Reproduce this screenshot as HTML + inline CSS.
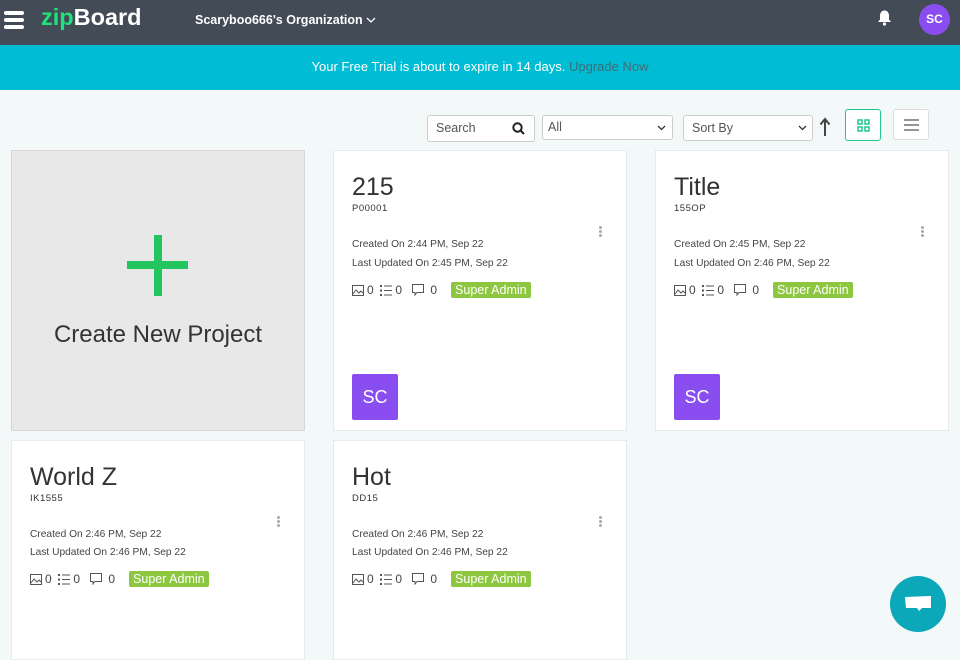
<!DOCTYPE html>
<html><head><style>
*{box-sizing:border-box;margin:0;padding:0}
body{width:960px;height:640px;overflow:hidden;background:#f3f8f8;font-family:"Liberation Sans","DejaVu Sans",sans-serif;position:relative;color:#333}
.hdr{position:absolute;left:0;top:0;width:960px;height:45px;background:#434b56}
.ban{position:absolute;left:0;top:45px;width:960px;height:45px;background:#00bcd4;color:#fff;font-size:13px;text-align:center;line-height:43px}
.ban span{color:#3a6f78}
.card{position:absolute;background:#fff;border:1px solid #e6ecec;width:294px}
.card .t{position:absolute;left:18px;top:22px;font-size:25px;font-weight:300;color:#333}
.card .c{position:absolute;left:18px;top:52px;font-size:9.5px;letter-spacing:.5px;color:#333}
.card .l{position:absolute;left:18px;font-size:10.2px;color:#444}
.card .row{position:absolute;left:18px;top:131px;font-size:12px;color:#444;display:flex;align-items:center}
.sa{background:#8dc63f;color:#fff;font-size:12.5px;padding:0 4px;border-radius:2px;height:16px;line-height:16px;margin-left:4px}
.av{position:absolute;left:18px;top:223px;width:46px;height:46px;background:#8a4ef0;color:#fff;font-size:18px;text-align:center;line-height:46px;border-radius:2px}
.keb{position:absolute;left:265px;top:75px;width:3px}
.keb i{display:block;width:3px;height:3px;background:#aaa;border-radius:50%;margin-bottom:1px}
.ic{display:inline-block;margin-right:3px}
.inp{position:absolute;background:#fff;border:1px solid #ccc;border-radius:3px;height:27px;font-size:12.5px;color:#555;line-height:25px;padding-left:8px}
</style></head><body>
<div class="hdr">
<div style="position:absolute;left:4px;top:11px;width:20px"><div style="height:4px;background:#fff;border-radius:2px;margin-bottom:3px"></div><div style="height:4px;background:#fff;border-radius:2px;margin-bottom:3px"></div><div style="height:4px;background:#fff;border-radius:2px"></div></div>
<div style="position:absolute;left:41px;top:4px;font-size:23.5px;font-weight:bold;color:#fff"><span style="color:#1ee37a">zip</span>Board</div>
<div style="position:absolute;left:195px;top:13px;font-size:12.5px;color:#fff;font-weight:bold">Scaryboo666's Organization <svg width="10" height="7" viewBox="0 0 10 7"><path d="M1 1l4 4 4-4" stroke="#fff" fill="none" stroke-width="1.3"/></svg></div>
<svg style="position:absolute;left:876px;top:9px" width="17" height="17" viewBox="0 0 17 17"><path d="M8.5 1.5c-3 0-4.5 2.5-4.5 5v4l-2 2.5h13l-2-2.5v-4c0-2.5-1.5-5-4.5-5z" fill="#fff"/><circle cx="8.5" cy="15" r="1.6" fill="#fff"/></svg>
<div style="position:absolute;left:919px;top:4px;width:31px;height:31px;border-radius:50%;background:#8a4ef0;color:#fff;font-size:12px;font-weight:bold;text-align:center;line-height:31px">SC</div>
</div>
<div class="ban">Your Free Trial is about to expire in 14 days. <span>Upgrade Now</span></div>

<div class="inp" style="left:427px;top:115px;width:108px">Search<svg style="position:absolute;right:9px;top:6px" width="13" height="13" viewBox="0 0 13 13"><circle cx="5.5" cy="5.5" r="4.2" stroke="#222" stroke-width="2" fill="none"/><path d="M8.5 8.5l3.5 3.5" stroke="#222" stroke-width="2"/></svg></div>
<div class="inp" style="left:542px;top:115px;width:131px;height:25px;line-height:23px;padding-left:5px">All<svg style="position:absolute;right:6px;top:9px" width="9" height="6"><path d="M1 1l3.5 3.5L8 1" stroke="#333" fill="none" stroke-width="1.3"/></svg></div>
<div class="inp" style="left:683px;top:115px;width:130px;height:26px">Sort By<svg style="position:absolute;right:5px;top:9px" width="9" height="6"><path d="M1 1l3.5 3.5L8 1" stroke="#333" fill="none" stroke-width="1.3"/></svg></div>
<svg style="position:absolute;left:819px;top:117px" width="12" height="20" viewBox="0 0 12 20"><path d="M6 19V3M1.5 7.5L6 2l4.5 5.5" stroke="#444" stroke-width="2" fill="none"/></svg>
<div style="position:absolute;left:845px;top:109px;width:36px;height:32px;border:1px solid #1ec98b;border-radius:3px;background:#fff"><svg style="position:absolute;left:11px;top:9px" width="13" height="13" viewBox="0 0 13 13" fill="none" stroke="#1ec98b" stroke-width="1.5"><rect x="1" y="1" width="4" height="4"/><rect x="8" y="1" width="4" height="4"/><rect x="1" y="8" width="4" height="4"/><rect x="8" y="8" width="4" height="4"/></svg></div>
<div style="position:absolute;left:893px;top:109px;width:36px;height:31px;border:1px solid #ddd;border-radius:3px;background:#fff"><svg style="position:absolute;left:10px;top:9px" width="15" height="12" viewBox="0 0 15 12"><path d="M0 1h15M0 6h15M0 11h15" stroke="#555" stroke-width="1.3"/></svg></div>

<div style="position:absolute;left:11px;top:150px;width:294px;height:281px;background:#e8e8e8;border:1px solid #d6d6d6">
<div style="position:absolute;left:115px;width:61px;height:8px;background:#22c55e;top:110px"></div>
<div style="position:absolute;left:142px;top:84px;width:8px;height:61px;background:#22c55e"></div>
<div style="position:absolute;left:0;width:100%;top:170px;text-align:center;font-size:24px;font-weight:300;color:#333">Create New Project</div>
</div>

<div class="card" style="left:333px;top:150px;height:281px"><div class="t">215</div><div class="c">P00001</div><div class="keb"><i></i><i></i><i></i></div><div class="l" style="top:88px">Created On 2:44 PM, Sep 22</div><div class="l" style="top:107px">Last Updated On 2:45 PM, Sep 22</div><div class="row">
<svg class="ic" width="12" height="11" viewBox="0 0 12 11" fill="none" stroke="#555"><rect x=".5" y=".5" width="11" height="10"/><path d="M1 9l3-4 3 3 2-2 2 2"/></svg>0&nbsp;&nbsp;<svg class="ic" width="12" height="11" viewBox="0 0 12 11" fill="#555"><rect x="0" y="0" width="2" height="2"/><rect x="0" y="4.5" width="2" height="2"/><rect x="0" y="9" width="2" height="2"/><rect x="4" y=".5" width="8" height="1"/><rect x="4" y="5" width="8" height="1"/><rect x="4" y="9.5" width="8" height="1"/></svg>0&nbsp;&nbsp;&nbsp;<svg class="ic" width="12" height="12" viewBox="0 0 12 12" fill="none" stroke="#555"><path d="M.5.5h11v8H5l-2 2.5v-2.5H.5z"/></svg>&nbsp;0&nbsp;&nbsp;&nbsp;<span class="sa">Super Admin</span></div><div class="av">SC</div></div>

<div class="card" style="left:655px;top:150px;height:281px"><div class="t">Title</div><div class="c">155OP</div><div class="keb"><i></i><i></i><i></i></div><div class="l" style="top:88px">Created On 2:45 PM, Sep 22</div><div class="l" style="top:107px">Last Updated On 2:46 PM, Sep 22</div><div class="row">
<svg class="ic" width="12" height="11" viewBox="0 0 12 11" fill="none" stroke="#555"><rect x=".5" y=".5" width="11" height="10"/><path d="M1 9l3-4 3 3 2-2 2 2"/></svg>0&nbsp;&nbsp;<svg class="ic" width="12" height="11" viewBox="0 0 12 11" fill="#555"><rect x="0" y="0" width="2" height="2"/><rect x="0" y="4.5" width="2" height="2"/><rect x="0" y="9" width="2" height="2"/><rect x="4" y=".5" width="8" height="1"/><rect x="4" y="5" width="8" height="1"/><rect x="4" y="9.5" width="8" height="1"/></svg>0&nbsp;&nbsp;&nbsp;<svg class="ic" width="12" height="12" viewBox="0 0 12 12" fill="none" stroke="#555"><path d="M.5.5h11v8H5l-2 2.5v-2.5H.5z"/></svg>&nbsp;0&nbsp;&nbsp;&nbsp;<span class="sa">Super Admin</span></div><div class="av">SC</div></div>

<div class="card" style="left:11px;top:440px;height:220px"><div class="t">World Z</div><div class="c">IK1555</div><div class="keb"><i></i><i></i><i></i></div><div class="l" style="top:88px">Created On 2:46 PM, Sep 22</div><div class="l" style="top:106px">Last Updated On 2:46 PM, Sep 22</div><div class="row" style="top:130px">
<svg class="ic" width="12" height="11" viewBox="0 0 12 11" fill="none" stroke="#555"><rect x=".5" y=".5" width="11" height="10"/><path d="M1 9l3-4 3 3 2-2 2 2"/></svg>0&nbsp;&nbsp;<svg class="ic" width="12" height="11" viewBox="0 0 12 11" fill="#555"><rect x="0" y="0" width="2" height="2"/><rect x="0" y="4.5" width="2" height="2"/><rect x="0" y="9" width="2" height="2"/><rect x="4" y=".5" width="8" height="1"/><rect x="4" y="5" width="8" height="1"/><rect x="4" y="9.5" width="8" height="1"/></svg>0&nbsp;&nbsp;&nbsp;<svg class="ic" width="12" height="12" viewBox="0 0 12 12" fill="none" stroke="#555"><path d="M.5.5h11v8H5l-2 2.5v-2.5H.5z"/></svg>&nbsp;0&nbsp;&nbsp;&nbsp;<span class="sa">Super Admin</span></div></div>

<div class="card" style="left:333px;top:440px;height:220px"><div class="t">Hot</div><div class="c">DD15</div><div class="keb"><i></i><i></i><i></i></div><div class="l" style="top:88px">Created On 2:46 PM, Sep 22</div><div class="l" style="top:106px">Last Updated On 2:46 PM, Sep 22</div><div class="row" style="top:130px">
<svg class="ic" width="12" height="11" viewBox="0 0 12 11" fill="none" stroke="#555"><rect x=".5" y=".5" width="11" height="10"/><path d="M1 9l3-4 3 3 2-2 2 2"/></svg>0&nbsp;&nbsp;<svg class="ic" width="12" height="11" viewBox="0 0 12 11" fill="#555"><rect x="0" y="0" width="2" height="2"/><rect x="0" y="4.5" width="2" height="2"/><rect x="0" y="9" width="2" height="2"/><rect x="4" y=".5" width="8" height="1"/><rect x="4" y="5" width="8" height="1"/><rect x="4" y="9.5" width="8" height="1"/></svg>0&nbsp;&nbsp;&nbsp;<svg class="ic" width="12" height="12" viewBox="0 0 12 12" fill="none" stroke="#555"><path d="M.5.5h11v8H5l-2 2.5v-2.5H.5z"/></svg>&nbsp;0&nbsp;&nbsp;&nbsp;<span class="sa">Super Admin</span></div></div>

<div style="position:absolute;left:890px;top:576px;width:56px;height:56px;border-radius:50%;background:#0aa8b8"><svg style="position:absolute;left:14px;top:14px" width="28" height="28" viewBox="0 0 28 28"><path d="M1 7l26-1v12H18l-3 3-2-3H2z" fill="#fff"/></svg></div>
</body></html>
